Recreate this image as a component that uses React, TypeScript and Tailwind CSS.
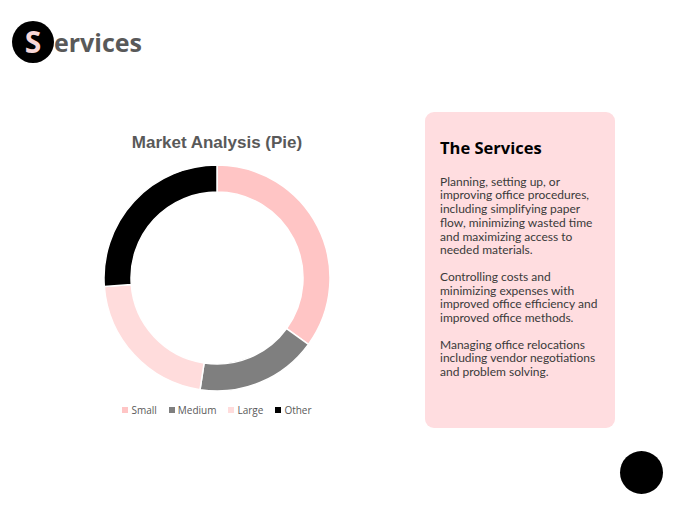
const segments = [
  { label: 'Small', value: 35, color: '#ffc5c5' },
  { label: 'Medium', value: 17.4, color: '#7f7f7f' },
  { label: 'Large', value: 21.4, color: '#ffdcdc' },
  { label: 'Other', value: 26.2, color: '#000000' },
]

function polar(cx: number, cy: number, r: number, deg: number) {
  const a = ((deg - 90) * Math.PI) / 180
  return [cx + r * Math.cos(a), cy + r * Math.sin(a)]
}

function arcPath(cx: number, cy: number, ro: number, ri: number, start: number, end: number) {
  const large = end - start > 180 ? 1 : 0
  const [x1, y1] = polar(cx, cy, ro, start)
  const [x2, y2] = polar(cx, cy, ro, end)
  const [x3, y3] = polar(cx, cy, ri, end)
  const [x4, y4] = polar(cx, cy, ri, start)
  return `M${x1} ${y1} A${ro} ${ro} 0 ${large} 1 ${x2} ${y2} L${x3} ${y3} A${ri} ${ri} 0 ${large} 0 ${x4} ${y4} Z`
}

function Donut() {
  const total = segments.reduce((s, d) => s + d.value, 0)
  let angle = 0
  return (
    <svg width="232" height="232" viewBox="0 0 232 232">
      {segments.map((s) => {
        const start = angle
        const end = angle + (s.value / total) * 360
        angle = end
        return (
          <path
            key={s.label}
            d={arcPath(116, 116, 113, 86, start, end)}
            fill={s.color}
            stroke="#ffffff"
            strokeWidth="1.5"
          />
        )
      })}
    </svg>
  )
}

export default function App() {
  return (
    <div className="relative h-[510px] w-[680px] overflow-hidden bg-white">
      <header className="flex items-center pl-3 pt-[21px]">
        <div className="flex h-[42px] w-[42px] items-center justify-center rounded-full bg-black">
          <span className="text-[30px] font-bold leading-none text-[#f8d7d7] [font-family:'Open_Sans',sans-serif]">S</span>
        </div>
        <h1 className="text-[25px] font-bold leading-none text-[#595959] [font-family:'Open_Sans',sans-serif]">ervices</h1>
      </header>

      <div className="flex pt-[49px]">
        <section className="flex w-[434px] flex-col items-center">
          <h2 className="mt-[18px] text-[17px] font-bold text-[#595959] [font-family:'Liberation_Sans',Arial,sans-serif]">
            Market Analysis (Pie)
          </h2>
          <div className="mt-[6px]">
            <Donut />
          </div>
          <ul className="mt-[9px] flex items-center gap-[12px] text-[10px] text-[#595959] [font-family:'Open_Sans',sans-serif]">
            {segments.map((s) => (
              <li key={s.label} className="flex items-center gap-[3px]">
                <span className="inline-block h-[6px] w-[6px]" style={{ backgroundColor: s.color }} />
                {s.label}
              </li>
            ))}
          </ul>
        </section>

        <aside className="ml-[-9px] h-[316px] w-[190px] rounded-[9px] bg-[#ffdde0] px-[15px] pt-[24px] text-[#3a3a3a] [font-family:Lato,sans-serif]">
          <h3 className="text-[16.5px] font-bold text-black [font-family:'Open_Sans',sans-serif]">The Services</h3>
          <div className="mt-[14px] space-y-[13px] text-[12px] leading-[13.7px]">
            <p>
              Planning, setting up, or improving office procedures, including simplifying paper flow, minimizing wasted
              time and maximizing access to needed materials.
            </p>
            <p>Controlling costs and minimizing expenses with improved office efficiency and improved office methods.</p>
            <p>Managing office relocations including vendor negotiations and problem solving.</p>
          </div>
        </aside>
      </div>

      <div className="absolute left-[620px] top-[451px] h-[43px] w-[43px] rounded-full bg-black" />
    </div>
  )
}
